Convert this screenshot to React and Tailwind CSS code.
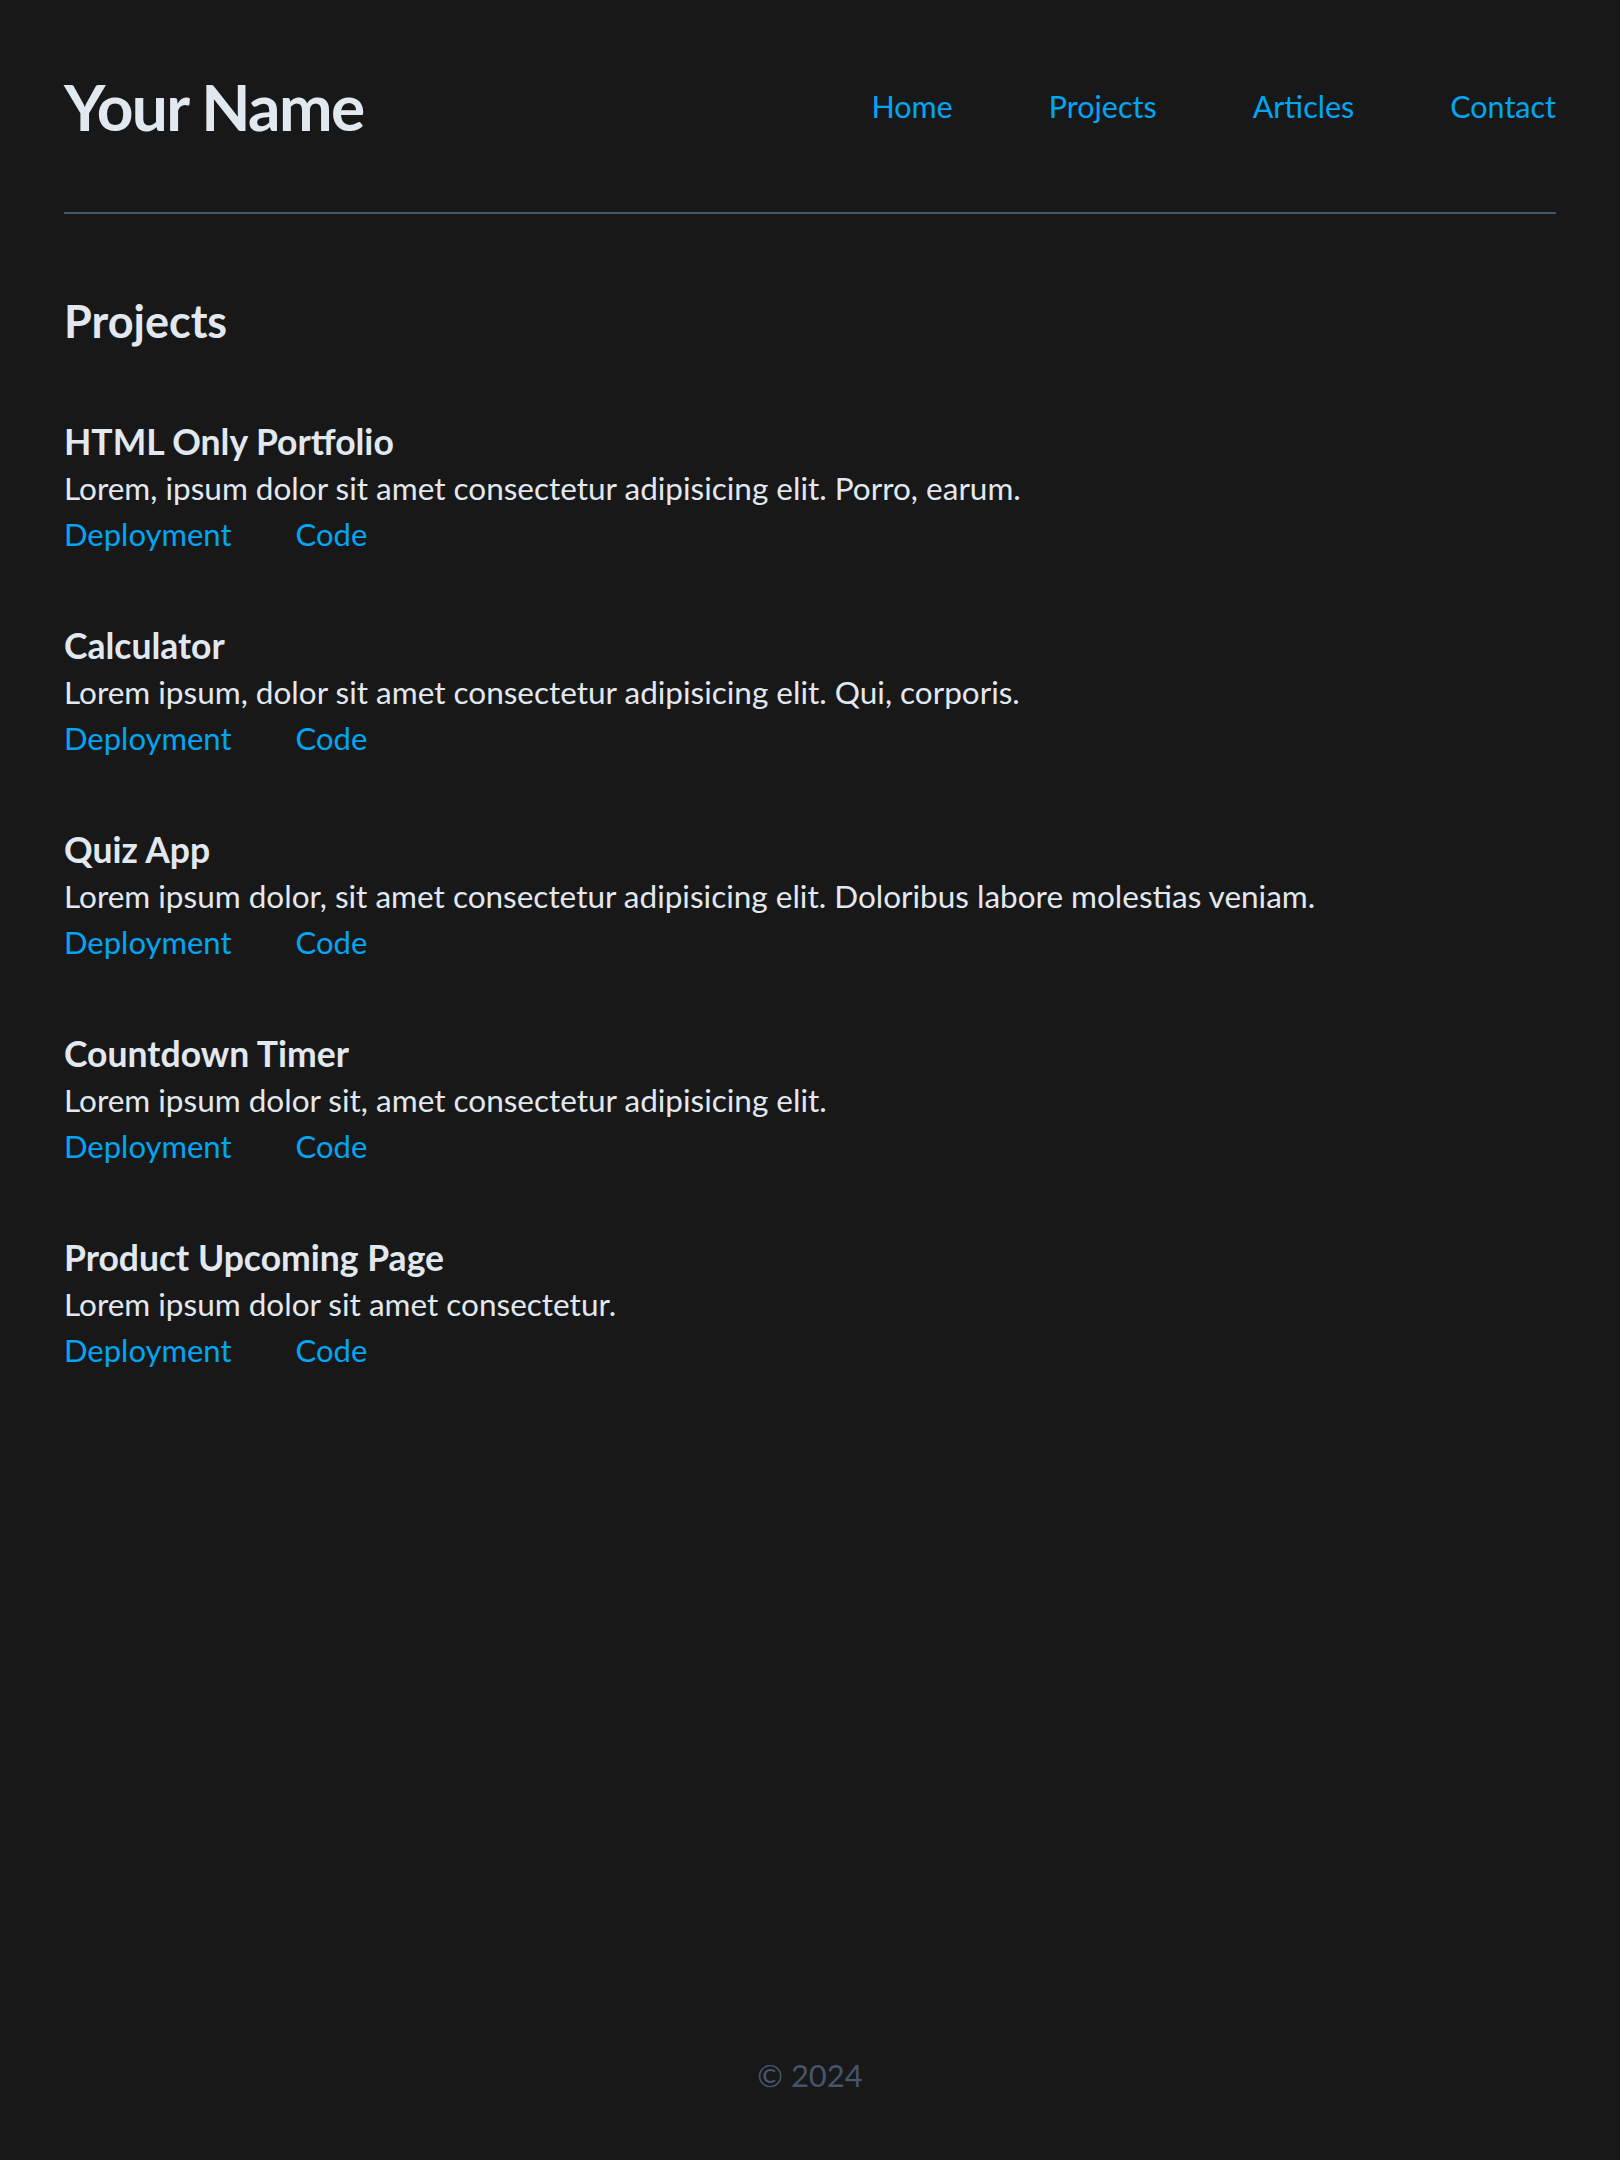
const PROJECTS = [
  {
    title: "HTML Only Portfolio",
    text: "Lorem, ipsum dolor sit amet consectetur adipisicing elit. Porro, earum.",
  },
  {
    title: "Calculator",
    text: "Lorem ipsum, dolor sit amet consectetur adipisicing elit. Qui, corporis.",
  },
  {
    title: "Quiz App",
    text: "Lorem ipsum dolor, sit amet consectetur adipisicing elit. Doloribus labore molestias veniam.",
  },
  {
    title: "Countdown Timer",
    text: "Lorem ipsum dolor sit, amet consectetur adipisicing elit.",
  },
  {
    title: "Product Upcoming Page",
    text: "Lorem ipsum dolor sit amet consectetur.",
  },
];

const NAV = ["Home", "Projects", "Articles", "Contact"];

export default function App() {
  return (
    <div className="min-h-screen bg-[#181818] text-slate-200 font-['Lato','Liberation_Sans',sans-serif] flex flex-col">
      <div className="px-16 flex-1">
        <header className="pt-[75px] flex justify-between items-center h-[139px]">
          <h1 className="text-[64px] leading-[64px] font-bold tracking-tight">Your Name</h1>
          <nav className="flex gap-24 text-[30.5px] text-sky-500">
            {NAV.map((item) => (
              <a key={item} href="#">
                {item}
              </a>
            ))}
          </nav>
        </header>

        <div className="mt-[73px] border-t-2 border-slate-600" />

        <main className="pt-[79px]">
          <h2 className="text-[45px] leading-[56px] font-bold">Projects</h2>

          <div className="mt-[70px] flex flex-col gap-[66px]">
            {PROJECTS.map((p) => (
              <div key={p.title} className="text-[31px] leading-[46px]">
                <h3 className="font-bold text-[35.5px]">{p.title}</h3>
                <p className="text-[31.5px]">{p.text}</p>
                <div className="flex gap-16 text-sky-500">
                  <a href="#">Deployment</a>
                  <a href="#">Code</a>
                </div>
              </div>
            ))}
          </div>
        </main>
      </div>

      <footer className="pb-[65px] text-center text-[31px] leading-[40px] text-slate-600">
        © 2024
      </footer>
    </div>
  );
}
